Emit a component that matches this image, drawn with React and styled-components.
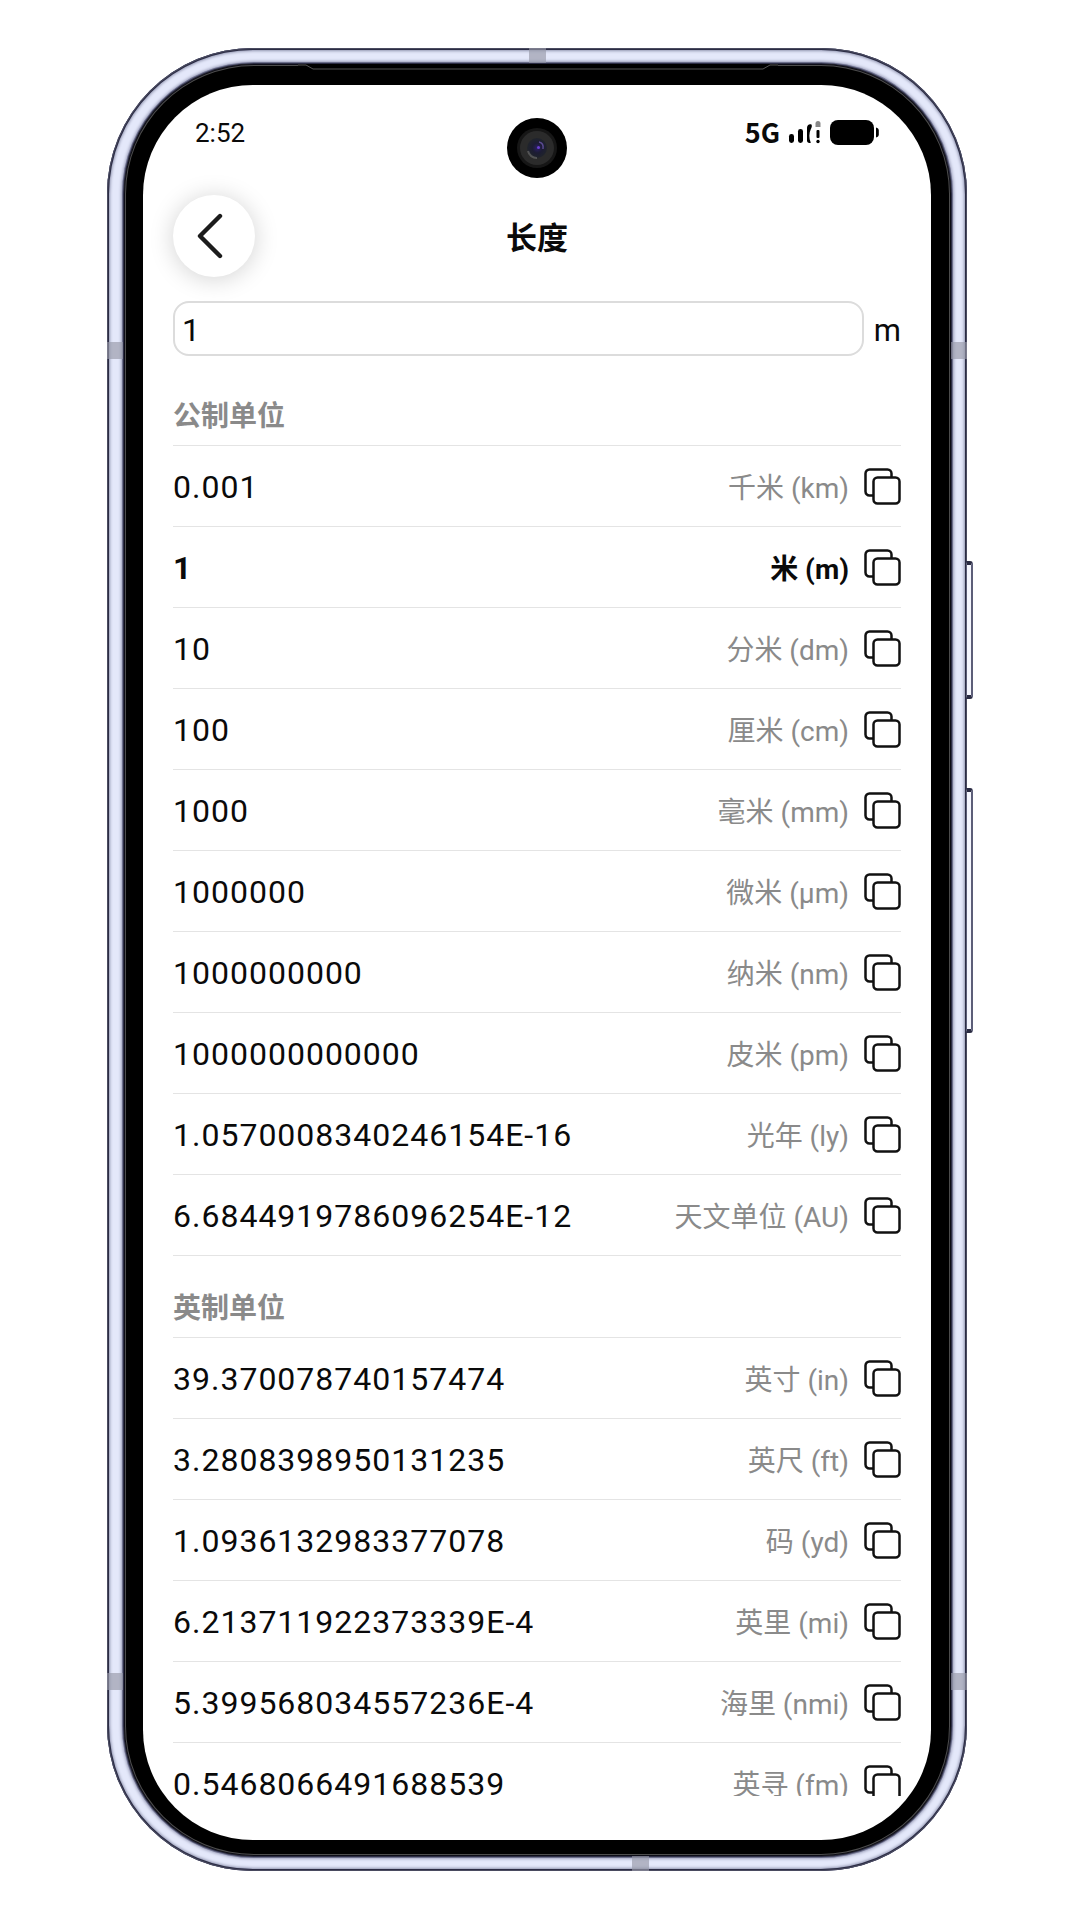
import React, { useState } from "react";
import styled, { createGlobalStyle } from "styled-components";

const metricUnits = [
    { value: "0.001", label: "千米 (km)" },
    { value: "1", label: "米 (m)", active: true },
    { value: "10", label: "分米 (dm)" },
    { value: "100", label: "厘米 (cm)" },
    { value: "1000", label: "毫米 (mm)" },
    { value: "1000000", label: "微米 (μm)" },
    { value: "1000000000", label: "纳米 (nm)" },
    { value: "1000000000000", label: "皮米 (pm)" },
    { value: "1.0570008340246154E-16", label: "光年 (ly)" },
    { value: "6.6844919786096254E-12", label: "天文单位 (AU)" },
];

const imperialUnits = [
    { value: "39.370078740157474", label: "英寸 (in)" },
    { value: "3.2808398950131235", label: "英尺 (ft)" },
    { value: "1.0936132983377078", label: "码 (yd)" },
    { value: "6.213711922373339E-4", label: "英里 (mi)" },
    { value: "5.399568034557236E-4", label: "海里 (nmi)" },
    { value: "0.5468066491688539", label: "英寻 (fm)" },
];

function CopyIcon() {
    return (
        <svg width="37" height="37" viewBox="0 0 37 37" fill="none" stroke="#111" strokeWidth="2.5">
            <path d="M9 27.5H5.500a4 4 0 0 1-4-4V5.500a4 4 0 0 1 4-4h18a4 4 0 0 1 4 4V9" />
            <rect x="9.500" y="9.500" width="26" height="26" rx="4" />
        </svg>
    );
}

function SignalIcon() {
    return (
        <svg width="34" height="24" viewBox="0 0 34 24">
            <rect x="1" y="14" width="5" height="9" rx="2.4" />
            <rect x="10" y="9" width="5" height="14" rx="2.4" />
            <path d="M23.500 4.500c-2.500-.8-4.500.8-4.500 3.500v12.500c0 2 1.500 3 3.800 2.300-2-4.800-1.800-9.800 0-13.600.9-1.800 1.500-3 .7-4.700z" />
            <path d="M27.500 7V3.500a2.500 2.500 0 0 1 5 0V7z" fill="#888" />
            <rect x="28.500" y="10" width="3" height="8" rx="1" />
            <circle cx="30" cy="21.500" r="1.700" />
        </svg>
    );
}

function BatteryIcon() {
    return (
        <svg width="49" height="25" viewBox="0 0 49 25">
            <rect width="44" height="25" rx="8" />
            <path d="M46 7.500c1.800.3 2.800 1.500 2.800 3v4c0 1.500-1 2.700-2.800 3z" />
        </svg>
    );
}

function CameraLens() {
    return (
        <svg width="60" height="60" viewBox="0 0 60 60">
            <defs>
                <radialGradient id="lens" cx="0.52" cy="0.5" r="0.5">
                    <stop offset="0" stopColor="#2b1f66" />
                    <stop offset="0.5" stopColor="#1c1c33" />
                    <stop offset="1" stopColor="#20242b" />
                </radialGradient>
            </defs>
            <circle cx="30" cy="30" r="30" />
            <circle cx="30" cy="30" r="20" fill="#161616" />
            <circle cx="30" cy="30" r="17" fill="#2b2b2b" />
            <circle cx="30" cy="30" r="10" fill="url(#lens)" />
            <path d="M21 33a9 9 0 0 0 9 7" fill="none" stroke="#666" strokeWidth="2" opacity="0.7" />
            <path d="M32 24q5 1 4 7" fill="none" stroke="#5a4a90" strokeWidth="1.500" />
            <circle cx="31.500" cy="29.500" r="1.500" fill="#6a3fd0" />
        </svg>
    );
}

function UnitGroup({ title, units }) {
    return (
        <section>
            <GroupTitle>{title}</GroupTitle>
            <UnitList>
                {units.map(({ value, label, active }) => (
                    <UnitRow key={label} $active={active}>
                        <UnitValue>{value}</UnitValue>
                        <UnitLabel $active={active}>{label}</UnitLabel>
                        <CopyButton type="button" aria-label={label}>
                            <CopyIcon />
                        </CopyButton>
                    </UnitRow>
                ))}
            </UnitList>
        </section>
    );
}

function App() {
    const [amount, setAmount] = useState("1");

    return (
        <Page>
            <GlobalStyle />
            <Device>
                <Frame>
                    <Bezel>
                        <Earpiece viewBox="0 0 480 8" preserveAspectRatio="none">
                            <path d="M0 1h8l7 4h450l7-4h8" fill="none" stroke="#555" />
                        </Earpiece>
                        <Screen>
                            <StatusBar>
                                <Clock>2:52</Clock>
                                <CameraLens />
                                <StatusIcons>
                                    <Network>5G</Network>
                                    <SignalIcon />
                                    <BatteryIcon />
                                </StatusIcons>
                            </StatusBar>
                            <Header>
                                <BackButton type="button" aria-label="返回">
                                    <svg width="26" height="46" viewBox="0 0 26 46" fill="none" stroke="#1c1c1c" strokeWidth="4.400" strokeLinecap="round" strokeLinejoin="round">
                                        <path d="M23 3 3 23l20 20" />
                                    </svg>
                                </BackButton>
                                <Title>长度</Title>
                            </Header>
                            <AmountRow>
                                <AmountInput
                                    id="amount"
                                    value={amount}
                                    onChange={(e) => setAmount(e.target.value)}
                                />
                                <AmountUnit htmlFor="amount">m</AmountUnit>
                            </AmountRow>
                            <Results>
                                <UnitGroup title="公制单位" units={metricUnits} />
                                <UnitGroup title="英制单位" units={imperialUnits} />
                            </Results>
                        </Screen>
                    </Bezel>
                    <Antenna $side="top" $at="50%" />
                    <Antenna $side="bottom" $at="62%" />
                    <Antenna $side="left" $at="294px" />
                    <Antenna $side="right" $at="294px" />
                    <Antenna $side="left" $at="1625px" />
                    <Antenna $side="right" $at="1625px" />
                </Frame>
                <SideKey $top="513px" $height="138px" />
                <SideKey $top="740px" $height="245px" />
            </Device>
        </Page>
    );
}

export default App;

const GlobalStyle = createGlobalStyle`
    * {
        box-sizing: border-box;
    }

    body {
        margin: 0;
        background: #fff;
        color: #0a0a0a;
        font-family: Roboto, "Noto Sans CJK SC", sans-serif;
    }

    button, input {
        font: inherit;
        color: inherit;
    }
`;

const Page = styled.div`
    display: flex;
    justify-content: center;
    height: 100vh;
    padding: 48px 16px 49px;
`;

const Device = styled.div`
    position: relative;
    display: flex;
    width: 100%;
    max-width: 866px;
    padding-right: 6px;
`;

const Frame = styled.div`
    position: relative;
    display: flex;
    flex: 1;
    min-width: 0;
    padding: 16px 16px 15px 17px;
    border-radius: 146px;
    background: #e4e8fa;
    box-shadow:
        inset 0 0 0 1px #4a4b60,
        inset 0 0 0 2px #2b2c44,
        inset 0 0 3px 3px #8f93ae;
`;

const Bezel = styled.div`
    display: flex;
    position: relative;
    flex: 1;
    min-width: 0;
    padding: 21px 20px 16px 19px;
    border-radius: 130px;
    background: #000;
    box-shadow:
        inset 0 0 0 1px #0c0c16,
        inset 0 0 0 2px #4c4c4c,
        0 0 0 1px #2c2d45,
        0 0 0 2px #6b6e8a,
        0 0 3px 3px #9c9fba;
`;

const Earpiece = styled.svg`
    position: absolute;
    top: 0;
    left: 50%;
    width: 480px;
    height: 8px;
    background: #000;
    transform: translateX(-50%);
`;

const Antenna = styled.span`
    position: absolute;
    background: rgba(150, 152, 168, 0.65);

    ${({ $side, $at }) =>
        $side === "left" || $side === "right"
            ? `${$side}: 0; top: ${$at}; width: 16px; height: 17px;`
            : `${$side}: 0; left: ${$at}; width: 17px; height: 15px; margin-left: -8px;`}
`;

const SideKey = styled.span`
    position: absolute;
    top: ${({ $top }) => $top};
    right: 0;
    width: 7px;
    height: ${({ $height }) => $height};
    border: solid #5c5e78;
    border-width: 4px 2px 4px 1px;
    border-top-color: #2a2b42;
    border-bottom-color: #2a2b42;
    border-radius: 0 3px 3px 0;
    background: #f4f5fd;
`;

const Screen = styled.main`
    display: flex;
    flex: 1;
    flex-direction: column;
    min-width: 0;
    padding: 33px 30px 44px;
    border-radius: 110px;
    background: #fff;
    overflow: hidden;
`;

const StatusBar = styled.div`
    display: grid;
    grid-template-columns: 1fr auto 1fr;
    align-items: start;
    padding: 0 22px;
`;

const Clock = styled.span`
    font-size: 26px;
    line-height: 30px;
`;

const StatusIcons = styled.div`
    display: flex;
    align-items: center;
    justify-content: flex-end;
    gap: 8px;
    height: 28px;
`;

const Network = styled.span`
    font-family: "Noto Sans CJK SC", Roboto, sans-serif;
    font-size: 27px;
    font-weight: 700;
    line-height: 28px;
`;

const Header = styled.header`
    display: grid;
    grid-template-columns: 1fr auto 1fr;
    align-items: center;
    padding-top: 17px;
`;

const BackButton = styled.button`
    display: flex;
    align-items: center;
    justify-content: center;
    width: 82px;
    height: 82px;
    padding: 0 8px 0 0;
    border: 0;
    border-radius: 50%;
    background: #fff;
    box-shadow: 0 2px 24px rgba(0, 0, 0, 0.18);
`;

const Title = styled.h1`
    margin: 0;
    padding-top: 6px;
    font-size: 31px;
    font-weight: 700;
    line-height: 40px;
`;

const AmountRow = styled.div`
    display: flex;
    align-items: center;
    gap: 10px;
    padding-top: 24px;
`;

const AmountInput = styled.input`
    flex: 1;
    min-width: 0;
    height: 55px;
    padding: 3px 7px 0;
    border: 2px solid #dcdcdc;
    border-radius: 16px;
    outline: 0;
    background: #fff;
    font-size: 32px;
`;

const AmountUnit = styled.label`
    padding-top: 3px;
    font-size: 31px;
`;

const Results = styled.div`
    flex: 1;
    min-height: 0;
    margin-top: 8px;
    overflow-y: auto;
    scrollbar-width: none;
`;

const GroupTitle = styled.h2`
    display: flex;
    align-items: flex-end;
    height: 82px;
    margin: 0;
    padding-bottom: 8px;
    border-bottom: 1px solid #e4e4e4;
    color: #8a8a8a;
    font-size: 28px;
    font-weight: 700;
    line-height: 40px;
`;

const UnitList = styled.ul`
    margin: 0;
    padding: 0;
    list-style: none;
`;

const UnitRow = styled.li`
    display: flex;
    align-items: center;
    height: 81px;
    border-bottom: 1px solid #e4e4e4;
    font-weight: ${({ $active }) => ($active ? 700 : 400)};
`;

const UnitValue = styled.span`
    flex: 1;
    padding-top: 2px;
    font-size: 32px;
    letter-spacing: 1px;
`;

const UnitLabel = styled.span`
    color: ${({ $active }) => ($active ? "#0a0a0a" : "#8a8a8a")};
    font-size: 28px;
`;

const CopyButton = styled.button`
    display: flex;
    margin-left: 15px;
    padding: 0;
    border: 0;
    background: none;
`;
